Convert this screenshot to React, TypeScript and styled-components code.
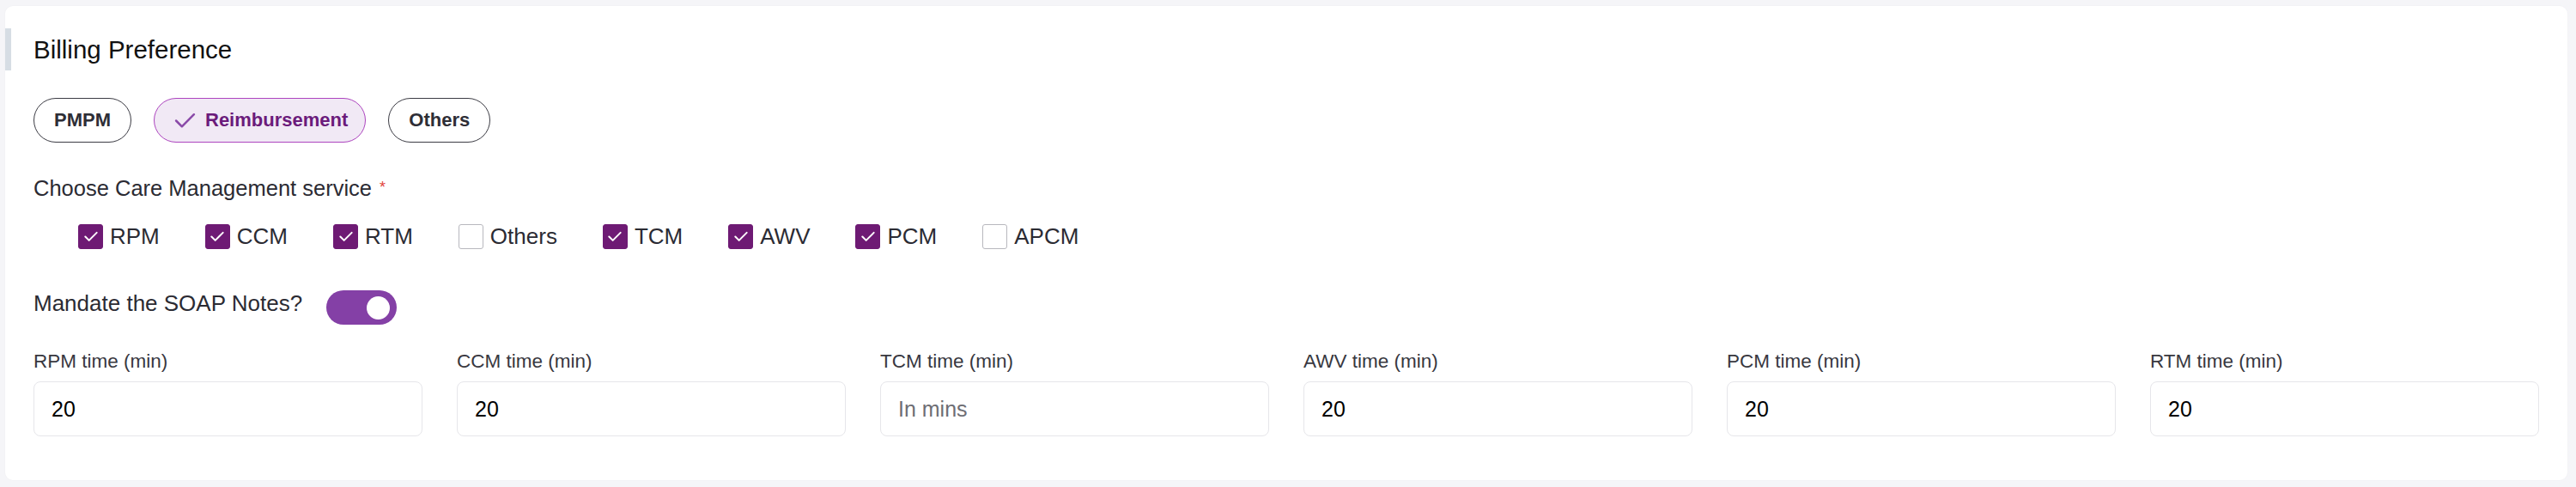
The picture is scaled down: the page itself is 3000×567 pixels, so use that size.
import React, { useState } from "react";
import styled, { createGlobalStyle } from "styled-components";

const GlobalStyle = createGlobalStyle`
  html, body {
    margin: 0;
    padding: 0;
    background: #f5f5f8;
    font-family: "Liberation Sans", Arial, sans-serif;
  }
`;

const Page = styled.div`
  padding: 7px 10px 8px 6px;
  background: #f5f5f8;
`;

const Card = styled.div`
  background: #ffffff;
  border-radius: 9px;
  padding: 26px 0 51px 0;
  box-shadow: 0 0 2px rgba(30, 30, 60, 0.04);
`;

const Header = styled.div`
  height: 49px;
  display: flex;
  align-items: center;
  border-left: 7px solid #d6dde4;
  padding-left: 26px;
  font-size: 29.5px;
  color: #111111;
`;

const Body = styled.div`
  padding: 0 33px 0 33px;
`;

const PillRow = styled.div`
  display: flex;
  gap: 26px;
  margin-top: 32px;
`;

const Pill = styled.button<{ $active?: boolean }>`
  box-sizing: border-box;
  height: 52px;
  display: flex;
  align-items: center;
  gap: 11px;
  padding: 0 ${(p) => (p.$active ? "20px" : "23px")} 0 23px;
  border-radius: 26px;
  border: 1px solid ${(p) => (p.$active ? "#ad45bf" : "#3c3c44")};
  background: ${(p) => (p.$active ? "#f1e9f5" : "#ffffff")};
  color: ${(p) => (p.$active ? "#6b1b7b" : "#2e2e36")};
  font-family: "Liberation Sans", Arial, sans-serif;
  font-weight: 700;
  font-size: 22px;
  cursor: pointer;
`;

const SectionLabel = styled.div`
  margin-top: 38px;
  font-size: 25.5px;
  line-height: 30px;
  color: #2b2b33;
`;

const Required = styled.span`
  color: #e2453c;
  font-size: 18px;
  margin-left: 9px;
  vertical-align: top;
  position: relative;
  top: -1px;
`;

const CheckRow = styled.div`
  display: flex;
  gap: 53px;
  margin-top: 27px;
  padding-left: 52px;
`;

const CheckItem = styled.label`
  display: flex;
  align-items: center;
  gap: 8px;
  height: 29px;
  font-size: 26px;
  color: #2b2b33;
  cursor: pointer;
`;

const Box = styled.span<{ $checked: boolean }>`
  box-sizing: border-box;
  width: 29px;
  height: 29px;
  border-radius: 3px;
  display: flex;
  align-items: center;
  justify-content: center;
  background: ${(p) => (p.$checked ? "#6e1a74" : "#ffffff")};
  border: 1px solid ${(p) => (p.$checked ? "#6e1a74" : "#b8b8be")};
`;

const ToggleRow = styled.div`
  display: flex;
  align-items: flex-start;
  gap: 28px;
  margin-top: 48px;
  font-size: 26px;
  line-height: 30px;
  color: #2b2b33;
`;

const Switch = styled.button<{ $on: boolean }>`
  box-sizing: border-box;
  width: 82px;
  height: 40px;
  border-radius: 20px;
  border: none;
  padding: 0 8px;
  display: flex;
  align-items: center;
  justify-content: ${(p) => (p.$on ? "flex-end" : "flex-start")};
  background: ${(p) => (p.$on ? "#8440a6" : "#c8c8cf")};
  cursor: pointer;
`;

const Knob = styled.span`
  width: 27px;
  height: 27px;
  border-radius: 50%;
  background: #ffffff;
`;

const FieldGrid = styled.div`
  display: grid;
  grid-template-columns: repeat(6, 1fr);
  column-gap: 40px;
  margin-top: 29px;
`;

const Field = styled.div`
  display: flex;
  flex-direction: column;
`;

const FieldLabel = styled.div`
  font-size: 22.5px;
  line-height: 27px;
  color: #38383f;
`;

const Input = styled.input`
  box-sizing: border-box;
  margin-top: 10px;
  width: 100%;
  height: 64px;
  border: 1px solid #e6e6ea;
  border-radius: 8px;
  padding: 0 20px;
  font-family: "Liberation Sans", Arial, sans-serif;
  font-size: 25px;
  color: #000000;
  outline: none;
  &::placeholder {
    color: #6e6e74;
  }
`;

const TickIcon = ({ color, w, h, sw }: { color: string; w: number; h: number; sw: number }) => (
  <svg width={w} height={h} viewBox="0 0 24 18" fill="none">
    <polyline points="2,9 8.5,15.5 22,2" stroke={color} strokeWidth={sw} strokeLinecap="round" strokeLinejoin="round" />
  </svg>
);

const services = [
  { name: "RPM", on: true },
  { name: "CCM", on: true },
  { name: "RTM", on: true },
  { name: "Others", on: false },
  { name: "TCM", on: true },
  { name: "AWV", on: true },
  { name: "PCM", on: true },
  { name: "APCM", on: false },
];

const times = [
  { label: "RPM time (min)", value: "20" },
  { label: "CCM time (min)", value: "20" },
  { label: "TCM time (min)", value: "" },
  { label: "AWV time (min)", value: "20" },
  { label: "PCM time (min)", value: "20" },
  { label: "RTM time (min)", value: "20" },
];

export default function App() {
  const [billing, setBilling] = useState("Reimbursement");
  const [checked, setChecked] = useState(services.map((s) => s.on));
  const [soap, setSoap] = useState(true);

  return (
    <Page>
      <GlobalStyle />
      <Card>
        <Header>Billing Preference</Header>
        <Body>
          <PillRow>
            {["PMPM", "Reimbursement", "Others"].map((b) => (
              <Pill key={b} $active={billing === b} onClick={() => setBilling(b)}>
                {billing === b && <TickIcon color="#8a4aa8" w={25} h={19} sw={2.4} />}
                {b}
              </Pill>
            ))}
          </PillRow>

          <SectionLabel>
            Choose Care Management service<Required>*</Required>
          </SectionLabel>

          <CheckRow>
            {services.map((s, i) => (
              <CheckItem
                key={s.name}
                onClick={() => setChecked(checked.map((c, j) => (j === i ? !c : c)))}
              >
                <Box $checked={checked[i]}>
                  {checked[i] && <TickIcon color="#ffffff" w={16} h={13} sw={3} />}
                </Box>
                {s.name}
              </CheckItem>
            ))}
          </CheckRow>

          <ToggleRow>
            Mandate the SOAP Notes?
            <Switch $on={soap} onClick={() => setSoap(!soap)}>
              <Knob />
            </Switch>
          </ToggleRow>

          <FieldGrid>
            {times.map((t) => (
              <Field key={t.label}>
                <FieldLabel>{t.label}</FieldLabel>
                <Input defaultValue={t.value} placeholder="In mins" />
              </Field>
            ))}
          </FieldGrid>
        </Body>
      </Card>
    </Page>
  );
}
